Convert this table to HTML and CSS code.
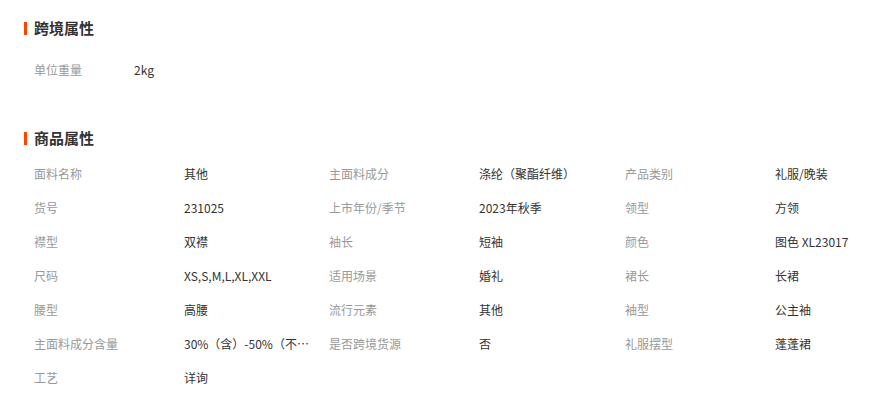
FILE: index.html
```html
<!DOCTYPE html>
<html lang="zh-CN">
<head>
<meta charset="utf-8">
<link rel="stylesheet" href="styles.css">
</head>
<body>
<div class="page">
  <section class="block">
    <h2 class="title"><span class="bar"></span>跨境属性</h2>
    <div class="grid grid-cross">
      <div class="label">单位重量</div><div class="value">2kg</div>
    </div>
  </section>
  <section class="block block-2">
    <h2 class="title"><span class="bar"></span>商品属性</h2>
    <div class="grid">
      <div class="label">面料名称</div><div class="value">其他</div>
      <div class="label">主面料成分</div><div class="value">涤纶（聚酯纤维）</div>
      <div class="label">产品类别</div><div class="value">礼服/晚装</div>

      <div class="label">货号</div><div class="value">231025</div>
      <div class="label">上市年份/季节</div><div class="value">2023年秋季</div>
      <div class="label">领型</div><div class="value">方领</div>

      <div class="label">襟型</div><div class="value">双襟</div>
      <div class="label">袖长</div><div class="value">短袖</div>
      <div class="label">颜色</div><div class="value">图色 XL23017</div>

      <div class="label">尺码</div><div class="value">XS,S,M,L,XL,XXL</div>
      <div class="label">适用场景</div><div class="value">婚礼</div>
      <div class="label">裙长</div><div class="value">长裙</div>

      <div class="label">腰型</div><div class="value">高腰</div>
      <div class="label">流行元素</div><div class="value">其他</div>
      <div class="label">袖型</div><div class="value">公主袖</div>

      <div class="label">主面料成分含量</div><div class="value">30%（含）-50%（不含）</div>
      <div class="label">是否跨境货源</div><div class="value">否</div>
      <div class="label">礼服摆型</div><div class="value">蓬蓬裙</div>

      <div class="label">工艺</div><div class="value">详询</div>
    </div>
  </section>
</div>
</body>
</html>
```
FILE: styles.css
```css
* { box-sizing: border-box; }
html, body { margin: 0; padding: 0; background: #fff; }
body {
  font-family: "Noto Sans CJK SC", "Noto Sans", "Liberation Sans", sans-serif;
  font-size: 12px;
  color: #333;
  overflow: hidden;
}
.page {
  padding: 18px 0 0 24px;
}
.title {
  display: flex;
  align-items: center;
  margin: 0;
  height: 20px;
  font-size: 15px;
  font-weight: bold;
  color: #333;
  line-height: 20px;
}
.bar {
  width: 3px;
  height: 13px;
  background: #ff4400;
  margin-right: 7px;
}
.block-2 { margin-top: 42px; }
.grid {
  display: grid;
  grid-template-columns: 150px 145px 150px 146px 150px 100px;
  grid-auto-rows: 34px;
  padding-left: 10px;
  margin-top: 8px;
  align-items: center;
}
.grid-cross {
  grid-template-columns: 100px 145px;
  margin-top: 14px;
}
.label {
  color: #999;
  white-space: nowrap;
}
.value {
  color: #333;
  white-space: nowrap;
  overflow: hidden;
  text-overflow: ellipsis;
  padding-right: 20px;
}
.grid .value:nth-child(6n) {
  overflow: visible;
  padding-right: 0;
}
```
